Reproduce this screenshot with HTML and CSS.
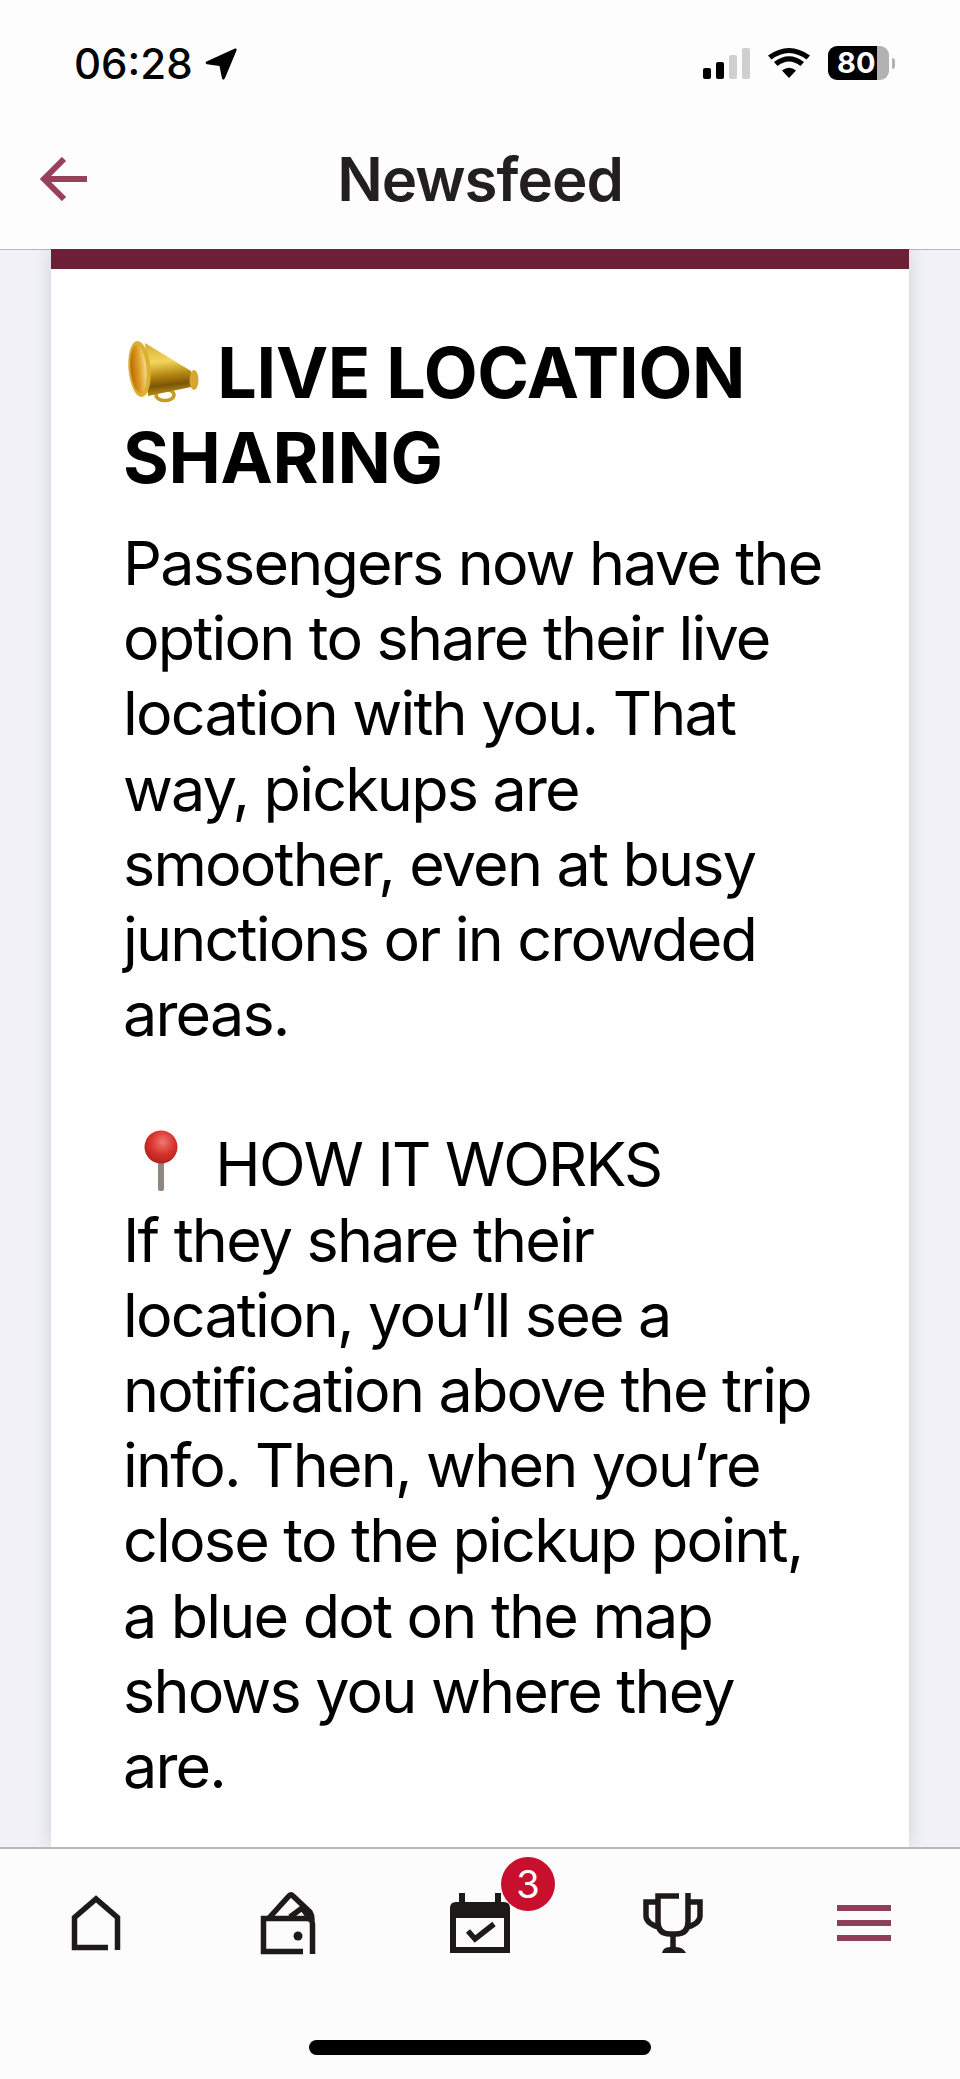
FILE: index.html
```html
<!DOCTYPE html>
<html lang="en">
<head>
  <meta charset="UTF-8">
  <title>Newsfeed</title>
  <link rel="stylesheet" href="styles.css">
</head>
<body>
  <div class="screen">
    <header class="top">
      <div class="status">
        <div class="clock">
          <span>06:28</span>
          <svg class="loc" viewBox="0 0 32 32"><path d="M30 0.5 L1.5 13.5 Q-0.5 15 2 16.2 L14.5 18 L17 30.5 Q18.5 33 20 30 L31.5 2.5 Q32 0 30 0.5Z"/></svg>
        </div>
        <div class="status-icons">
          <div class="signal">
            <i class="b1"></i><i class="b2"></i><i class="b3"></i><i class="b4"></i>
          </div>
          <svg class="wifi" viewBox="0 0 42 32">
            <path d="M21 31 L14 23.5 Q21 18 28 23.5Z"/>
            <path d="M9.5 19 L6 15 Q21 3.5 36 15 L32.5 19 Q21 10 9.5 19Z"/>
            <path d="M3.5 12.5 L0 8.5 Q21 -6.5 42 8.5 L38.5 12.5 Q21 -0.5 3.5 12.5Z"/>
          </svg>
          <div class="battery"><span>80</span></div>
          <div class="battery-nub"></div>
        </div>
      </div>
      <div class="titlebar">
        <svg class="back" viewBox="0 0 48 44"><path d="M48 22 H5 M25 2 L5 22 L25 42" fill="none" stroke="#98405a" stroke-width="6"/></svg>
        <h1>Newsfeed</h1>
      </div>
    </header>

    <main class="feed">
      <article class="card">
        <h2>
          <svg class="emoji megaphone" viewBox="0 0 74 62">
            <defs>
              <linearGradient id="horn" x1="0.3" y1="0" x2="0.4" y2="1">
                <stop offset="0" stop-color="#d9ae35"/>
                <stop offset="0.35" stop-color="#f2d65e"/>
                <stop offset="0.6" stop-color="#b98a14"/>
                <stop offset="0.8" stop-color="#7d5606"/>
                <stop offset="1" stop-color="#c4941a"/>
              </linearGradient>
              <linearGradient id="mouth" x1="0" y1="0" x2="1" y2="0">
                <stop offset="0" stop-color="#b8690a"/>
                <stop offset="0.5" stop-color="#dc9a22"/>
                <stop offset="1" stop-color="#f5dd86"/>
              </linearGradient>
            </defs>
            <ellipse cx="37" cy="54" rx="9" ry="5.5" fill="none" stroke="#c89c22" stroke-width="3.5"/>
            <path d="M17 2 L63 30 L63 46 L20 55Z" fill="url(#horn)"/>
            <ellipse cx="11.5" cy="28" rx="11" ry="28" fill="#dcae32" transform="rotate(-5 11.5 28)"/>
            <ellipse cx="10.5" cy="28" rx="8" ry="24" fill="url(#mouth)" transform="rotate(-5 10.5 28)"/>
            <ellipse cx="66" cy="39" rx="4.5" ry="10" fill="#d6a72c"/>
          </svg>
          LIVE LOCATION SHARING
        </h2>
        <p>Passengers now have the option to share their live location with you. That way, pickups are smoother, even at busy junctions or in crowded areas.</p>
        <p class="gap">
          <svg class="emoji pin" viewBox="0 0 34 62">
            <defs>
              <radialGradient id="ball" cx="0.55" cy="0.35" r="0.65">
                <stop offset="0" stop-color="#ef7a72"/>
                <stop offset="0.55" stop-color="#d8352f"/>
                <stop offset="1" stop-color="#b5201f"/>
              </radialGradient>
            </defs>
            <rect x="14" y="28" width="6" height="33" rx="2" fill="#8f8780"/>
            <circle cx="17" cy="17" r="16.5" fill="url(#ball)"/>
          </svg>
          HOW IT WORKS<br>
          If they share their location, you’ll see a notification above the trip info. Then, when you’re close to the pickup point, a blue dot on the map shows you where they are.
        </p>
      </article>
    </main>

    <nav class="tabs">
      <div class="tab">
        <svg viewBox="0 0 72 72"><path class="line" d="M48 61.5 H14.5 V31.5 L36 13 L57.5 31.5 V64"/></svg>
      </div>
      <div class="tab">
        <svg viewBox="0 0 72 72">
          <path class="line" d="M51 65.5 H11.5 V32.5 H55 Q60.5 32.5 60.5 38 V68"/>
          <path class="line" d="M17 32 L37 10 Q39 8 41 10 L58 26 Q60 29 60 34"/>
          <path class="line" d="M38 31 L50 22 L57 31"/>
          <circle cx="46" cy="50" r="4.5" fill="#1f1a1a"/>
        </svg>
      </div>
      <div class="tab">
        <svg viewBox="0 0 72 72">
          <path d="M15 7 H21 V16 H51 V7 H57 V16 H60 Q66 16 66 22 V67 H6 V22 Q6 16 12 16 H15Z M12 32 V61 H60 V32Z" fill="#1f1a1a" fill-rule="evenodd"/>
          <path class="line" d="M24 45 L31 53 L50 38"/>
        </svg>
        <span class="badge">3</span>
      </div>
      <div class="tab">
        <svg viewBox="0 0 72 72">
          <path class="line" d="M43 10 H22 V36 Q22 48 34 48 H40 Q52 48 52 36 V7"/>
          <path class="line" d="M22 16 H10 V30 Q10 37 22 41"/>
          <path class="line" d="M52 16 H64 V30 Q64 37 52 41"/>
          <path class="line" d="M37 48 V62"/>
          <path d="M26 67 Q27 61 34 61 H40 Q47 61 50 67Z" fill="#1f1a1a"/>
        </svg>
      </div>
      <div class="tab">
        <div class="burger"><i></i><i></i><i></i></div>
      </div>
    </nav>
    <div class="home-area"><div class="home-bar"></div></div>
  </div>
</body>
</html>
```

FILE: styles.css
```css
* {
  box-sizing: border-box;
}

html,
body {
  margin: 0;
  padding: 0;
}

body {
  font-family: Inter, "Liberation Sans", sans-serif;
  color: #000;
  background-color: #f1f1f7;
}

.screen {
  width: 960px;
  height: 2079px;
  display: flex;
  flex-direction: column;
  overflow: hidden;
}

.top {
  height: 250px;
  background-color: #fdfdfe;
  border-bottom: 1px solid #b8b8bc;
}

.status {
  height: 118px;
  padding: 46px 65px 0 74px;
  display: flex;
  justify-content: space-between;
}

.clock {
  display: flex;
  align-items: flex-start;
  gap: 12px;
  font-size: 42px;
  font-weight: 500;
  line-height: 36px;
  height: 36px;
}

.loc {
  width: 32px;
  height: 32px;
  margin-top: 2px;
}

.status-icons {
  display: flex;
  align-items: flex-start;
}

.signal {
  display: flex;
  align-items: flex-end;
  gap: 5px;
  height: 31px;
  margin-top: 2px;
}

.signal i {
  display: block;
  width: 8px;
  border-radius: 2px;
  background-color: #000;
}

.signal .b1 { height: 11px; }
.signal .b2 { height: 17px; }
.signal .b3 { height: 24px; background-color: #cfcfcf; }
.signal .b4 { height: 31px; background-color: #cfcfcf; }

.wifi {
  width: 42px;
  height: 32px;
  margin-left: 18px;
  margin-top: 1px;
}

.battery {
  width: 61px;
  height: 34px;
  margin-left: 18px;
  border-radius: 9px;
  background: linear-gradient(to right, #000 49px, #b2b2b2 49px);
  color: #fff;
  font-size: 29px;
  font-weight: 700;
  line-height: 34px;
  padding-left: 9px;
}

.battery-nub {
  width: 3px;
  height: 11px;
  margin: 12px 0 0 3px;
  border-radius: 0 3px 3px 0;
  background-color: #b2b2b2;
}

.titlebar {
  position: relative;
  height: 131px;
  display: flex;
  align-items: flex-start;
  justify-content: center;
}

.back {
  position: absolute;
  left: 39px;
  top: 39px;
  width: 48px;
  height: 44px;
}

h1 {
  margin: 0;
  font-size: 60px;
  font-weight: 600;
  letter-spacing: -1px;
  line-height: 72px;
  margin-top: 25px;
  color: #231f20;
}

.feed {
  flex: 1;
  min-height: 0;
  overflow: hidden;
  padding: 0 51px;
  margin-top: -1px;
}

.card {
  height: 100%;
  background-color: #fff;
  border-top: 20px solid #6b2035;
  padding: 61px 85px 0 72px;
  box-shadow: 0 0 16px rgba(70, 70, 120, 0.2);
}

h2 {
  margin: 0 0 26px;
  font-size: 70px;
  font-weight: 700;
  letter-spacing: -0.3px;
  line-height: 85px;
}

.card p {
  margin: 0;
  font-size: 61px;
  line-height: 75.2px;
  letter-spacing: -1.8px;
}

.card p.gap {
  margin-top: 75px;
}

.emoji {
  display: inline-block;
  vertical-align: baseline;
}

.megaphone {
  width: 74px;
  height: 62px;
  margin: 0 -1px -5px 5px;
}

.pin {
  width: 34px;
  height: 62px;
  margin: 0 22px -6px 21px;
}

.tabs {
  height: 129px;
  background-color: #fcfcfd;
  border-top: 2px solid #b8b8bc;
  display: grid;
  grid-template-columns: repeat(5, 1fr);
  padding-top: 37px;
  position: relative;
  z-index: 1;
}

.tab {
  position: relative;
  display: flex;
  justify-content: center;
}

.tab svg {
  width: 72px;
  height: 72px;
}

.line {
  fill: none;
  stroke: #1f1a1a;
  stroke-width: 5.5;
}

.badge {
  position: absolute;
  left: 117px;
  top: -29px;
  width: 54px;
  height: 54px;
  border-radius: 50%;
  background-color: #c8102e;
  color: #fff;
  font-size: 38px;
  line-height: 54px;
  text-align: center;
}

.burger {
  width: 54px;
  display: flex;
  flex-direction: column;
  gap: 9px;
  padding-top: 19px;
}

.burger i {
  display: block;
  height: 6px;
  background-color: #8f3f58;
}

.home-area {
  height: 103px;
  padding-top: 64px;
  background-color: #fcfcfd;
  position: relative;
  z-index: 1;
}

.home-bar {
  width: 342px;
  height: 15px;
  margin: 0 auto;
  border-radius: 8px;
  background-color: #000;
}
```
